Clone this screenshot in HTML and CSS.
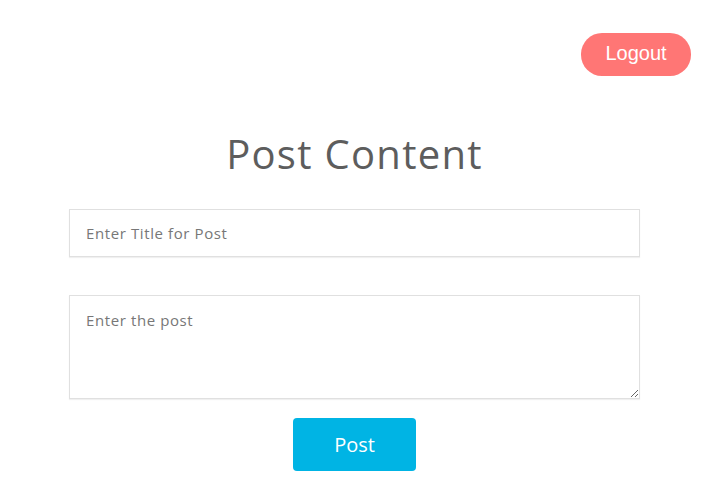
FILE: index.html
```html
<!DOCTYPE html>
<html>
<head>
<meta charset="utf-8">
<link rel="stylesheet" href="styles.css">
</head>
<body>
<header class="topbar">
  <button class="logout">Logout</button>
</header>
<main class="main">
  <h1 class="title">Post Content</h1>
  <form class="form">
    <input class="field" type="text" placeholder="Enter Title for Post">
    <textarea class="field area" placeholder="Enter the post"></textarea>
    <button class="post" type="button">Post</button>
  </form>
</main>
</body>
</html>
```
FILE: styles.css
```css
html, body {
  margin: 0;
  padding: 0;
  background: #fff;
}
body {
  font-family: "Open Sans", "DejaVu Sans", sans-serif;
}
.topbar {
  display: flex;
  justify-content: flex-end;
  padding: 33px 26px 0 0;
}
.logout {
  width: 110px;
  height: 43px;
  border: none;
  border-radius: 21px;
  background: #ff7675;
  color: #fff;
  font-family: "Liberation Sans", Arial, sans-serif;
  font-size: 20px;
  padding: 0;
  padding-bottom: 2px;
}
.main {
  width: 571px;
  margin-left: 69px;
  display: flex;
  flex-direction: column;
}
.title {
  margin: 54px 0 0 0;
  text-align: center;
  font-weight: 400;
  font-size: 40px;
  line-height: 48px;
  color: #5d5d5d;
  letter-spacing: 1.3px;
}
.form {
  display: flex;
  flex-direction: column;
  align-items: center;
  margin-top: 31px;
}
.field {
  box-sizing: border-box;
  width: 571px;
  height: 48px;
  border: 1px solid #e0e0e0;
  box-shadow: 0 1px 1px rgba(0,0,0,0.06);
  padding: 0 16px;
  font-family: "Open Sans", "DejaVu Sans", sans-serif;
  font-size: 15px;
  letter-spacing: 0.6px;
  color: #555;
  outline: none;
  background: #fff;
}
.field::placeholder {
  color: #777;
}
.area {
  height: 104px;
  margin-top: 38px;
  padding-top: 14px;
  resize: vertical;
}
.post {
  margin-top: 19px;
  width: 123px;
  height: 53px;
  border: none;
  border-radius: 4px;
  background: #00b4e4;
  color: #fff;
  font-family: "Open Sans", "DejaVu Sans", sans-serif;
  font-size: 20px;
  font-weight: 500;
  padding: 0;
}
```
